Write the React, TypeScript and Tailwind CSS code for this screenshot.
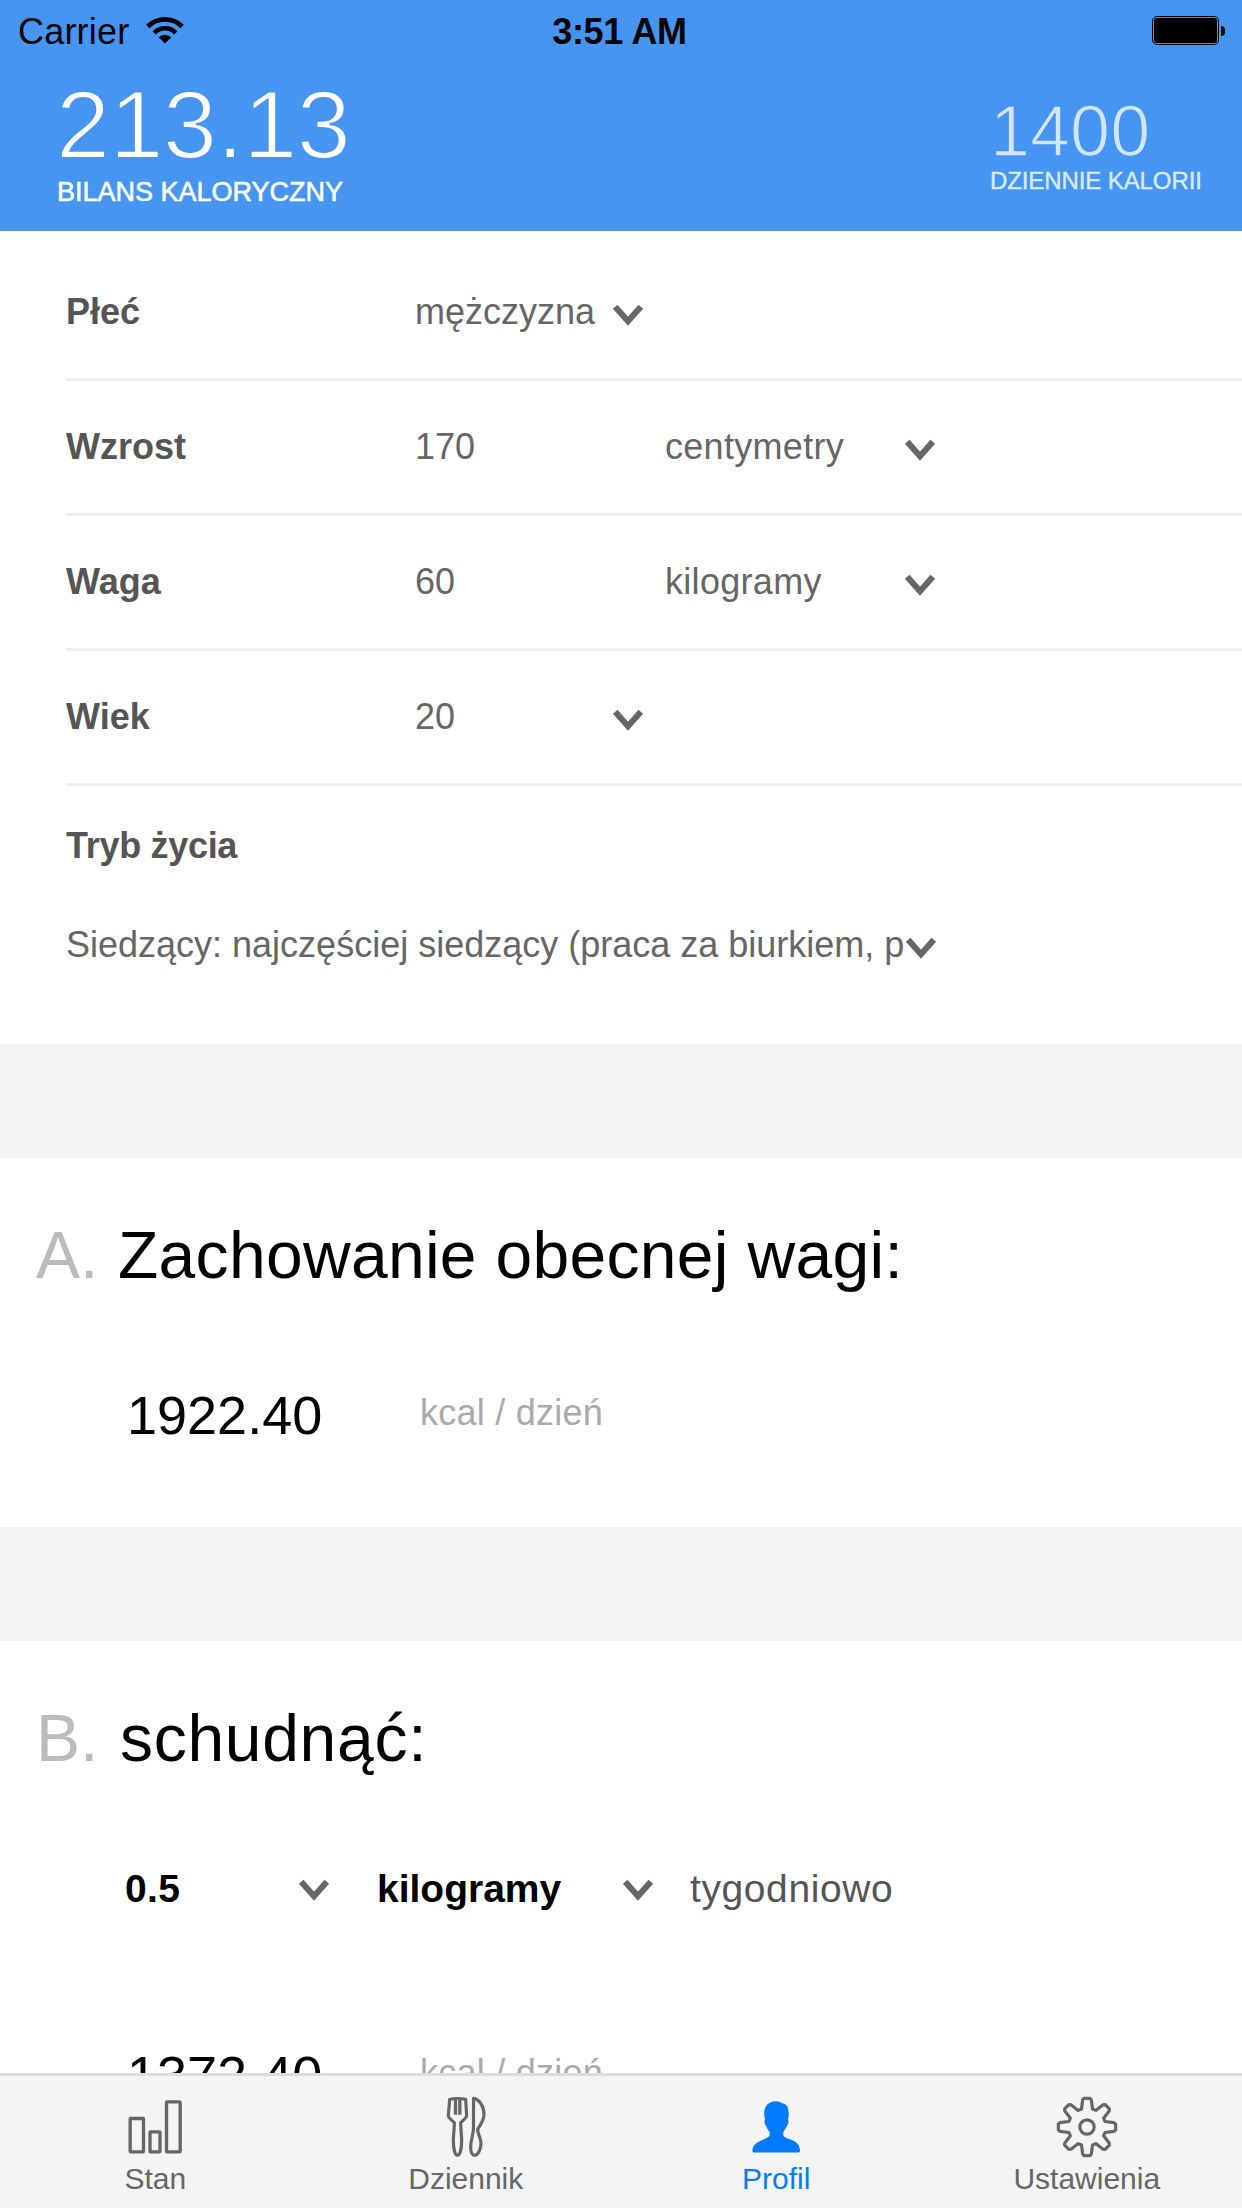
import React from "react";

function Chevron({ className = "" }: { className?: string }) {
  return (
    <svg viewBox="0 -6 30 27" className={`h-[27px] w-[30px] shrink-0 overflow-visible ${className}`} fill="none">
      <path d="M2.2 1.8 15 16.2 27.8 1.8" stroke="#666" strokeWidth="6.2" />
    </svg>
  );
}

function WifiIcon() {
  return (
    <svg viewBox="0 0 38 28" className="ml-[17px] h-7 w-[38px] -translate-y-[2px]" fill="none">
      <path d="M1.8 10.5a24.4 24.4 0 0 1 34.4 0" stroke="#000" strokeWidth="4.6" />
      <path d="M8.1 16.8a15.4 15.4 0 0 1 21.8 0" stroke="#000" strokeWidth="4.6" />
      <path d="M12.7 21.2a9 9 0 0 1 12.6 0L19 27.6z" fill="#000" />
    </svg>
  );
}

function Battery() {
  return (
    <div className="flex items-center justify-end gap-[2px] pr-[17px] pb-[2px]">
      <div className="h-[29px] w-[67px] rounded-[5px] border border-black p-px">
        <div className="h-full w-full rounded-[3px] bg-black" />
      </div>
      <div className="h-[10px] w-1 rounded-r-full bg-black" />
    </div>
  );
}

function Row({ label, value, first, unit }: { label: string; value: string; first?: boolean; unit?: string }) {
  return (
    <div className="ml-[66px] flex h-[135px] items-center border-b-[3px] border-[#eee] text-[36px] leading-[54px] text-[#666]">
      <div className="w-[349px] font-bold text-[#555]">{label}</div>
      <div className="w-[198px]">{value}</div>
      <div className="w-[30px]">{first && <Chevron />}</div>
      {unit && (
        <>
          <div className="ml-[22px] w-[240px] tracking-[0.3px]">{unit}</div>
          <Chevron />
        </>
      )}
    </div>
  );
}

function Heading({ letter, children }: { letter: string; children: React.ReactNode }) {
  return (
    <h2 className="flex pl-9 text-[66px] leading-[80px]">
      <span className="w-[82px] text-[#bbb]">{letter}</span>
      {children}
    </h2>
  );
}

function Calories({ value }: { value: string }) {
  return (
    <div className="flex items-start pl-[127px]">
      <span className="w-[293px] text-[54px] leading-[60px]">{value}</span>
      <span className="text-[36px] leading-[55px] tracking-[0.25px] text-[#aaa]">kcal / dzień</span>
    </div>
  );
}

function BarsIcon() {
  return (
    <svg viewBox="142 108 168 186" className="h-[62px] w-14" fill="none" stroke="currentColor" strokeWidth="10">
      <rect x="151.5" y="175.500" width="40" height="100" rx="2" />
      <rect x="211" y="215.500" width="30" height="60" rx="2" />
      <rect x="260.500" y="125.500" width="41" height="150" rx="2" />
    </svg>
  );
}

function CutleryIcon() {
  return (
    <svg viewBox="165 108 126 186" className="h-[62px] w-[42px]" fill="none" stroke="currentColor" strokeWidth="9.5" strokeLinejoin="round">
      <path d="M179 118Q203 113 227 118L230 168Q229 173 212 188Q212 198 215 238C215 262 211 286 202.500 286C194 286 190 262 190 238Q193 198 193 188Q176 173 175 168Z" />
      <path d="M196.500 117v47M209.500 117v47" strokeWidth="10" />
      <path d="M250.500 115C269 118 282 140 282 163C282 184 270 194 263 208C262 218 273 235 273 250C273 268 264 286 254 286C243 286 242 272 242 260C242 240 250 225 250.500 205Z" />
    </svg>
  );
}

function PersonIcon() {
  return (
    <svg viewBox="153 108 150 186" className="h-[62px] w-[50px]" fill="currentColor">
      <path d="M228 123.500C236 123.500 242 126 247 130C254 131 261 136 263 141C264 149 267 158 266 166Q266 173 264 178C267 183 265 192 262 195C259 203 254 211 250 216V226C254 240 299 236 300 271Q300 277.500 296 277.500H161Q157 277.500 157 271C160 240 204 240 209 226V216C204 210 200 203 198 197C194 195 192 184 195 178C191 162 193 148 197 140C203 129 215 123.500 228 123.500Z" />
    </svg>
  );
}

const TOOTH: [number, number][] = [
  [-16.5, -54],
  [-13, -81],
  [-9, -86],
  [9, -86],
  [13, -81],
  [16.5, -54],
];

const GEAR = Array.from({ length: 8 }, (_, i) => {
  const a = (i * Math.PI) / 4;
  return TOOTH.map(
    ([x, y]) => `${(x * Math.cos(a) - y * Math.sin(a)).toFixed(2)},${(x * Math.sin(a) + y * Math.cos(a)).toFixed(2)}`,
  ).join(" ");
}).join(" ");

function GearIcon() {
  return (
    <svg viewBox="-93 -93 186 186" className="h-[62px] w-[62px]" fill="none" stroke="currentColor" strokeWidth="9.5" strokeLinejoin="round">
      <polygon points={GEAR} />
      <circle r="21.500" />
    </svg>
  );
}

const TABS = [
  { label: "Stan", icon: <BarsIcon /> },
  { label: "Dziennik", icon: <CutleryIcon /> },
  { label: "Profil", icon: <PersonIcon />, active: true },
  { label: "Ustawienia", icon: <GearIcon /> },
];

export default function App() {
  return (
    <div className="flex h-[2208px] w-[1242px] flex-col overflow-hidden bg-white font-['Liberation_Sans',Arial,sans-serif] text-black">
      <header className="h-[231px] shrink-0 bg-[#4595f1]">
        <div className="grid h-[63px] grid-cols-3 items-center text-[36px] leading-[40px]">
          <div className="flex items-center pl-[18px]">
            <span className="tracking-[0.2px]">Carrier</span>
            <WifiIcon />
          </div>
          <div className="pr-[3px] text-center font-bold tracking-[-0.3px]">3:51 AM</div>
          <Battery />
        </div>
        <div className="flex items-start text-white">
          <div className="w-[934px] pt-3 pl-[57px]">
            <div className="-ml-px text-[97px] leading-[100px] tracking-[-0.4px] [-webkit-text-stroke:2px_#4595f1]">213.13</div>
            <div className="text-[27px] leading-[34px] [-webkit-text-stroke:0.6px_#fff]">BILANS KALORYCZNY</div>
          </div>
          <div className="pt-7 pl-14">
            <div className="text-[72px] leading-[80px] text-[#d2e5fb] [-webkit-text-stroke:1.5px_#4595f1]">1400</div>
            <div className="text-[24px] leading-[20px] tracking-[-0.1px] text-[#daeafc] [-webkit-text-stroke:0.4px_#daeafc]">DZIENNIE KALORII</div>
          </div>
        </div>
      </header>

      <main className="min-h-0 flex-1 overflow-hidden">
        <section className="h-[813px] pt-[15px]">
          <Row label="Płeć" value="mężczyzna" first />
          <Row label="Wzrost" value="170" unit="centymetry" />
          <Row label="Waga" value="60" unit="kilogramy" />
          <Row label="Wiek" value="20" first />
          <div className="pt-[33px] pl-[66px] text-[36px] leading-[54px]">
            <div className="font-bold tracking-[-0.3px] text-[#555]">Tryb życia</div>
            <div className="mt-[45px] flex items-center text-[#666]">
              <span className="w-[840px] overflow-hidden whitespace-nowrap">
                Siedzący: najczęściej siedzący (praca za biurkiem, p
              </span>
              <Chevron />
            </div>
          </div>
        </section>

        <div className="h-[114px] bg-[#f2f3f5]" />

        <section className="h-[369px] pt-[57px]">
          <Heading letter="A.">
            <span className="tracking-[0.3px]">Zachowanie obecnej wagi:</span>
          </Heading>
          <div className="mt-[90px]">
            <Calories value="1922.40" />
          </div>
        </section>

        <div className="h-[114px] bg-[#f2f3f5]" />

        <section className="pt-[57px]">
          <Heading letter="B.">
            <span className="ml-[2px] tracking-[0.7px]">schudnąć:</span>
          </Heading>
          <div className="mt-[84px] flex items-center pl-[125px] text-[39px] leading-[54px]">
            <span className="w-[174px] font-bold tracking-[0.3px]">0.5</span>
            <Chevron className="-mt-1" />
            <span className="ml-[48px] w-[246px] font-bold">kilogramy</span>
            <Chevron className="-mt-1" />
            <span className="ml-[37px] tracking-[0.6px] text-[#555]">tygodniowo</span>
          </div>
          <div className="mt-[129px]">
            <Calories value="1372.40" />
          </div>
        </section>
      </main>

      <nav className="grid h-[135px] shrink-0 grid-cols-4 border-t-[3px] border-[#ddd] bg-[#f4f4f4]">
        {TABS.map((tab) => (
          <div
            key={tab.label}
            className={`flex flex-col items-center pt-5 text-[30px] leading-[36px] ${tab.active ? "text-[#007aff]" : "text-[#666]"}`}
          >
            {tab.icon}
            <span className="mt-[3px]">{tab.label}</span>
          </div>
        ))}
      </nav>
    </div>
  );
}
